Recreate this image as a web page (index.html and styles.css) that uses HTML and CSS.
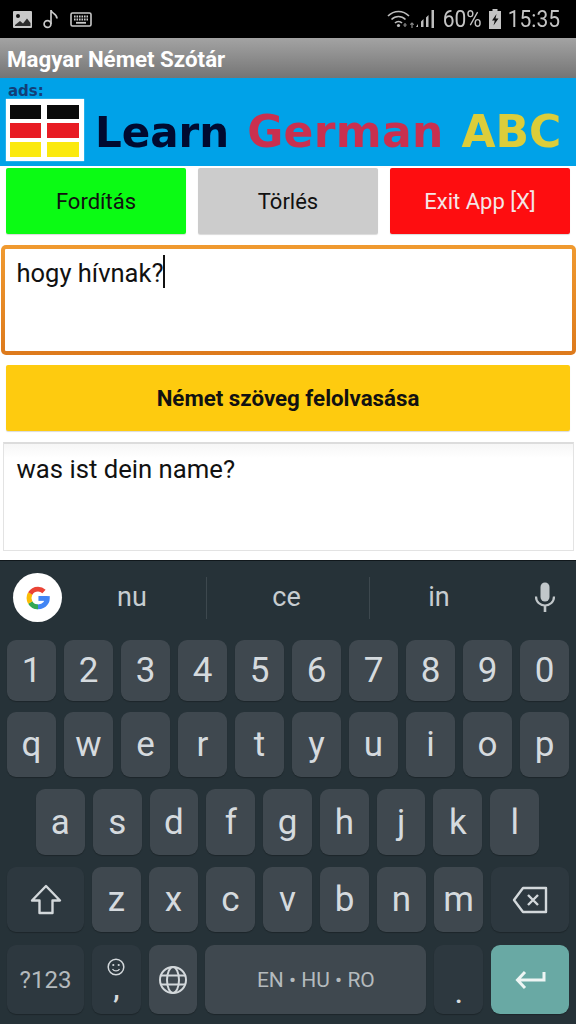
FILE: index.html
```html
<!DOCTYPE html>
<html lang="hu">
<head>
<meta charset="utf-8">
<title>Magyar Német Szótár</title>
<link rel="stylesheet" href="styles.css">
</head>
<body>
<div class="phone">
  <header class="status">
    <div class="status-left">
      <svg width="19" height="17" viewBox="0 0 19 17"><rect x="0" y="0" width="19" height="17" rx="1" fill="#c9c9c9"/><circle cx="5" cy="5" r="2" fill="#111"/><path d="M2 14l5-4 3 2.500 4-5 3.500 4.500V15H2z" fill="#111" opacity=".85"/></svg>
      <svg width="16" height="20" viewBox="0 0 16 20"><circle cx="4.500" cy="15" r="3.400" fill="none" stroke="#c9c9c9" stroke-width="1.700"/><path d="M8 15V1c0 3.500 6 3.500 6 8.500" fill="none" stroke="#c9c9c9" stroke-width="1.700"/></svg>
      <svg width="22" height="15" viewBox="0 0 22 15"><rect x="1" y="1" width="20" height="13" rx="1.500" fill="none" stroke="#c9c9c9" stroke-width="1.600"/><path d="M4 4.500h14M4 7.500h14" stroke="#c9c9c9" stroke-width="1.800" stroke-dasharray="1.600 .9"/><path d="M6 10.800h10" stroke="#c9c9c9" stroke-width="1.800"/></svg>
    </div>
    <div class="status-right">
      <svg class="wifi" width="27" height="20" viewBox="0 0 27 20"><path d="M1 7c6-6 15-6 21 0M4.500 10.500c4-4 10-4 14 0M8 14c2-2 5-2 7 0" fill="none" stroke="#bdbdbd" stroke-width="1.700"/><circle cx="11.500" cy="16.500" r="1.600" fill="#bdbdbd"/><path d="M18 18v-4m-1.800 2h3.600M25 19v-5m-1.700 1.700l1.700-1.700 1.700 1.700" fill="none" stroke="#8a8a8a" stroke-width="1.200"/></svg>
      <svg class="signal" width="20" height="20" viewBox="0 0 20 20"><path d="M1 18h2v-3zM6 18h2.500V10L6 12.500zM11 18h2.500V6L11 8.500zM16.500 19h2.500V1h-2.500z" fill="#bdbdbd"/></svg>
      <span class="pct">60%</span>
      <svg class="batt" width="14" height="20" viewBox="0 0 14 20"><path d="M4.500 0h5v2h3.500v18H1V2h3.500z" fill="#c4c4c4"/><path d="M8.500 5L4 11.500h2.800L5.500 16.500 10.500 9.500H7.500z" fill="#111"/></svg>
      <span class="time">15:35</span>
    </div>
  </header>

  <div class="titlebar">Magyar Német Szótár</div>

  <div class="banner">
    <div class="ads">ads:</div>
    <div class="ad-row">
      <div class="flag">
        <i class="cell black"></i><i class="cell black"></i>
        <i class="cell red"></i><i class="cell red"></i>
        <i class="cell yellow"></i><i class="cell yellow"></i>
      </div>
      <div class="ad-text"><span class="learn">Learn</span><span class="german">German</span><span class="abc">ABC</span></div>
    </div>
  </div>

  <main class="form">
    <div class="actions">
      <button class="btn green">Fordítás</button>
      <button class="btn gray">Törlés</button>
      <button class="btn redbtn">Exit App [X]</button>
    </div>
    <div class="input"><span>hogy hívnak?</span><i class="caret"></i></div>
    <button class="btn speak">Német szöveg felolvasása</button>
    <div class="output">was ist dein name?</div>
  </main>

  <section class="keyboard">
    <div class="suggest">
      <div class="gbtn">
        <svg width="30" height="30" viewBox="0 0 34 34">
          <path d="M28 17.500H17.500" fill="none" stroke="#4285f4" stroke-width="5.500"/>
          <path d="M27.500 15c.8 5.500-2.500 12-10.500 12-1.500 0-2.800-.3-4-.8" fill="none" stroke="#4285f4" stroke-width="5.500"/>
          <path d="M17 27c-3.800 0-7-2-8.800-5" fill="none" stroke="#34a853" stroke-width="5.500"/>
          <path d="M8.200 22.200c-1.700-3.200-1.700-7.200 0-10.400" fill="none" stroke="#fbbc05" stroke-width="5.500"/>
          <path d="M8.200 12c1.800-3 5-5 8.800-5 2.700 0 5 1 6.800 2.600" fill="none" stroke="#ea4335" stroke-width="5.500"/>
        </svg>
      </div>
      <div class="sug first">nu</div>
      <div class="sug div">ce</div>
      <div class="sug div last">in</div>
      <div class="mic">
        <svg width="22" height="32" viewBox="0 0 22 32"><rect x="6.500" y="0.500" width="9" height="19" rx="4.500" fill="#c1c7ca"/><path d="M2 14.500c0 5.500 4 9 9 9s9-3.500 9-9" fill="none" stroke="#c1c7ca" stroke-width="2.200"/><path d="M11 23v7" stroke="#c1c7ca" stroke-width="2.600"/></svg>
      </div>
    </div>

    <div class="krow r1">
      <div class="key">1</div><div class="key">2</div><div class="key">3</div><div class="key">4</div><div class="key">5</div><div class="key">6</div><div class="key">7</div><div class="key">8</div><div class="key">9</div><div class="key">0</div>
    </div>
    <div class="krow r2">
      <div class="key">q</div><div class="key">w</div><div class="key">e</div><div class="key">r</div><div class="key">t</div><div class="key">y</div><div class="key">u</div><div class="key">i</div><div class="key">o</div><div class="key">p</div>
    </div>
    <div class="krow r3">
      <div class="key">a</div><div class="key">s</div><div class="key">d</div><div class="key">f</div><div class="key">g</div><div class="key">h</div><div class="key">j</div><div class="key">k</div><div class="key">l</div>
    </div>
    <div class="krow r4">
      <div class="key lwide dim">
        <svg width="32" height="32" viewBox="0 0 32 32"><path d="M16 2L30 16.500H22.500V29H9.500V16.500H2z" fill="none" stroke="#d3d8db" stroke-width="2.400" stroke-linejoin="round"/></svg>
      </div>
      <div class="key">z</div><div class="key">x</div><div class="key">c</div><div class="key">v</div><div class="key">b</div><div class="key">n</div><div class="key">m</div>
      <div class="key rwide dim">
        <svg width="36" height="28" viewBox="0 0 36 28"><path d="M11 2H34V26H11L2 14z" fill="none" stroke="#d3d8db" stroke-width="2.400" stroke-linejoin="round"/><path d="M16 9l10 10M26 9L16 19" stroke="#d3d8db" stroke-width="2.400"/></svg>
      </div>
    </div>
    <div class="krow r5">
      <div class="key lwide dim sym">?123</div>
      <div class="key dim comma">
        <svg width="18" height="18" viewBox="0 0 18 18"><circle cx="9" cy="9" r="7.800" fill="none" stroke="#d3d8db" stroke-width="1.500"/><circle cx="6.300" cy="7" r="1.100" fill="#d3d8db"/><circle cx="11.700" cy="7" r="1.100" fill="#d3d8db"/><path d="M5.500 11c1.500 2.500 5.500 2.500 7 0" fill="none" stroke="#d3d8db" stroke-width="1.300"/></svg>
        <span>,</span>
      </div>
      <div class="key">
        <svg width="30" height="30" viewBox="0 0 30 30"><g fill="none" stroke="#d3d8db" stroke-width="2"><circle cx="15" cy="15" r="13"/><ellipse cx="15" cy="15" rx="6" ry="13"/><path d="M3 10.500h24M3 19.500h24"/></g></svg>
      </div>
      <div class="key space">EN • HU • RO</div>
      <div class="key dim period"><span>.</span></div>
      <div class="key rwide enter">
        <svg width="32" height="20" viewBox="0 0 32 20"><path d="M30 2V10H4M11 2L3.500 10 11 18" fill="none" stroke="#eef5f4" stroke-width="3"/></svg>
      </div>
    </div>
  </section>
</div>
</body>
</html>
```

FILE: styles.css
```css
* { box-sizing: border-box; }
html, body { margin: 0; background: #fff; }
.phone {
  width: 576px;
  height: 1024px;
  overflow: hidden;
  display: flex;
  flex-direction: column;
  font-family: Roboto, "Liberation Sans", sans-serif;
}

/* status bar */
.status {
  height: 38px;
  background: #000;
  display: flex;
  justify-content: space-between;
  align-items: center;
  padding: 0 16px 0 13px;
  color: #c4c4c4;
}
.status-left { display: flex; align-items: center; gap: 11px; }
.status-right { display: flex; align-items: center; }
.signal { margin-left: 1px; }
.pct { font-size: 21px; margin-left: 8px; display: inline-block; transform: scaleY(1.15); }
.batt { margin-left: 6px; }
.time { font-size: 21px; margin-left: 6px; display: inline-block; transform: scaleY(1.15); }

/* title */
.titlebar {
  height: 40px;
  background: linear-gradient(#a3a3a3, #757575);
  color: #fff;
  font-size: 22.300px;
  font-weight: 700;
  line-height: 43px;
  padding-left: 7px;
}

/* ad banner */
.banner {
  height: 88px;
  background: #00a2e8;
  padding: 5px 0 0 6px;
}
.ads {
  font: 700 15px/16px "DejaVu Sans", sans-serif;
  color: #123f78;
  padding-left: 2px;
}
.ad-row { display: flex; align-items: center; }
.flag {
  width: 78px;
  height: 62px;
  background: #fff;
  display: grid;
  grid-template-columns: 31px 32px;
  grid-template-rows: 14px 15px 15px;
  column-gap: 6px;
  row-gap: 4px;
  padding: 6px 0 0 4px;
  box-shadow: 0 0 1px #dff;
  filter: blur(.4px);
}
.cell { display: block; }
.black { background: #0a0a0a; }
.red { background: #e81c24; }
.yellow { background: #fbe90e; }
.ad-text {
  font: 700 42px/50px "DejaVu Sans", sans-serif;
  display: flex;
  align-items: baseline;
  gap: 18px;
  margin-left: 11px;
  padding-top: 5px;
  filter: blur(.5px);
}
.learn { color: #000a30; }
.german { color: #c9304f; font-size: 44px; letter-spacing: .3px; }
.abc { color: #dccd3a; font-size: 44px; }

/* form */
.form {
  height: 394px;
  background: #fff;
  display: flex;
  flex-direction: column;
  align-items: center;
}
.actions {
  width: 564px;
  margin-top: 2px;
  display: flex;
  gap: 12px;
}
.btn {
  border: 0;
  border-radius: 2px;
  font-family: inherit;
  font-size: 22px;
  padding: 0;
  box-shadow: 0 1px 1px rgba(0,0,0,.15);
}
.actions .btn { flex: 1; height: 66px; color: #111; padding-top: 1px; }
.green { background: #0bfb14; }
.gray { background: #cccccc; }
.actions .redbtn { background: #fe0d10; color: #f4e6e6; }
.input {
  width: 575px;
  height: 110px;
  margin-top: 11px;
  border: 4px solid transparent;
  border-radius: 5px;
  background: linear-gradient(#fff, #fff) padding-box, linear-gradient(#f09a30, #dd7a1c) border-box;
  padding: 8px 12px;
  font-size: 25.500px;
  line-height: 32px;
  color: #111;
  display: flex;
  align-items: flex-start;
}
.caret {
  display: block;
  width: 2px;
  height: 33px;
  background: #111;
  margin: -2px 0 0 0;
}
.speak {
  width: 564px;
  height: 66px;
  margin-top: 10px;
  background: #fecb0f;
  color: #111;
  font-size: 22.300px;
  font-weight: 700;
}
.output {
  width: 571px;
  height: 109px;
  margin-top: 11px;
  border: 1px solid #e3e3e3;
  border-top: 2px solid #dcdcdc;
  background: linear-gradient(#f6f6f6, #fff 14px);
  padding: 9px 13px;
  font-size: 25.700px;
  line-height: 32px;
  color: #111;
}

/* keyboard */
.keyboard {
  flex: 1;
  background: #263238;
  border-top: 1px solid #11181c;
  padding: 0 7px;
}
.suggest {
  height: 79px;
  display: flex;
  align-items: center;
  padding-bottom: 6px;
}
.gbtn {
  flex: none;
  width: 49px;
  height: 49px;
  margin-left: 6px;
  border-radius: 50%;
  background: #fff;
  display: flex;
  align-items: center;
  justify-content: center;
}
.sug {
  flex: none;
  height: 42px;
  font-size: 27px;
  line-height: 40px;
  color: #c7cdd0;
  text-align: center;
}
.sug.first { width: 144px; padding-right: 4px; }
.sug.div { width: 163px; padding-right: 3px; border-left: 1px solid #3d484e; }
.sug.div.last { width: 142px; }
.mic { flex: none; margin-left: 23px; display: flex; }
.krow { display: flex; gap: 8px; }
.r1 { height: 61px; }
.r2 { height: 65px; margin-top: 11px; }
.r3 { height: 66px; margin-top: 12px; padding: 0 30px 0 29px; }
.r4 { height: 65px; margin-top: 12px; }
.r5 { height: 69px; margin-top: 13px; }
.key {
  flex: 1 1 0;
  min-width: 0;
  background: #3f484f;
  border-radius: 9px;
  box-shadow: 0 1px 1px rgba(0,0,0,.25);
  color: #d5dade;
  font-size: 35px;
  font-weight: 400;
  display: flex;
  align-items: center;
  justify-content: center;
}
.key.lwide { flex: 0 0 77px; }
.key.rwide { flex: 0 0 78px; }
.key.dim { background: #2d383f; }
.key.sym { font-size: 24px; color: #b4babd; }
.comma { flex-direction: column; padding-top: 0; }
.comma span { font-size: 26px; line-height: 26px; font-weight: 700; }
.key.space { flex: 0 0 221px; font-size: 21px; color: #b4babd; }
.period { align-items: flex-end; }
.period span { font-size: 24px; line-height: 38px; font-weight: 700; }
.key.enter { background: #69a9a4; }
```
